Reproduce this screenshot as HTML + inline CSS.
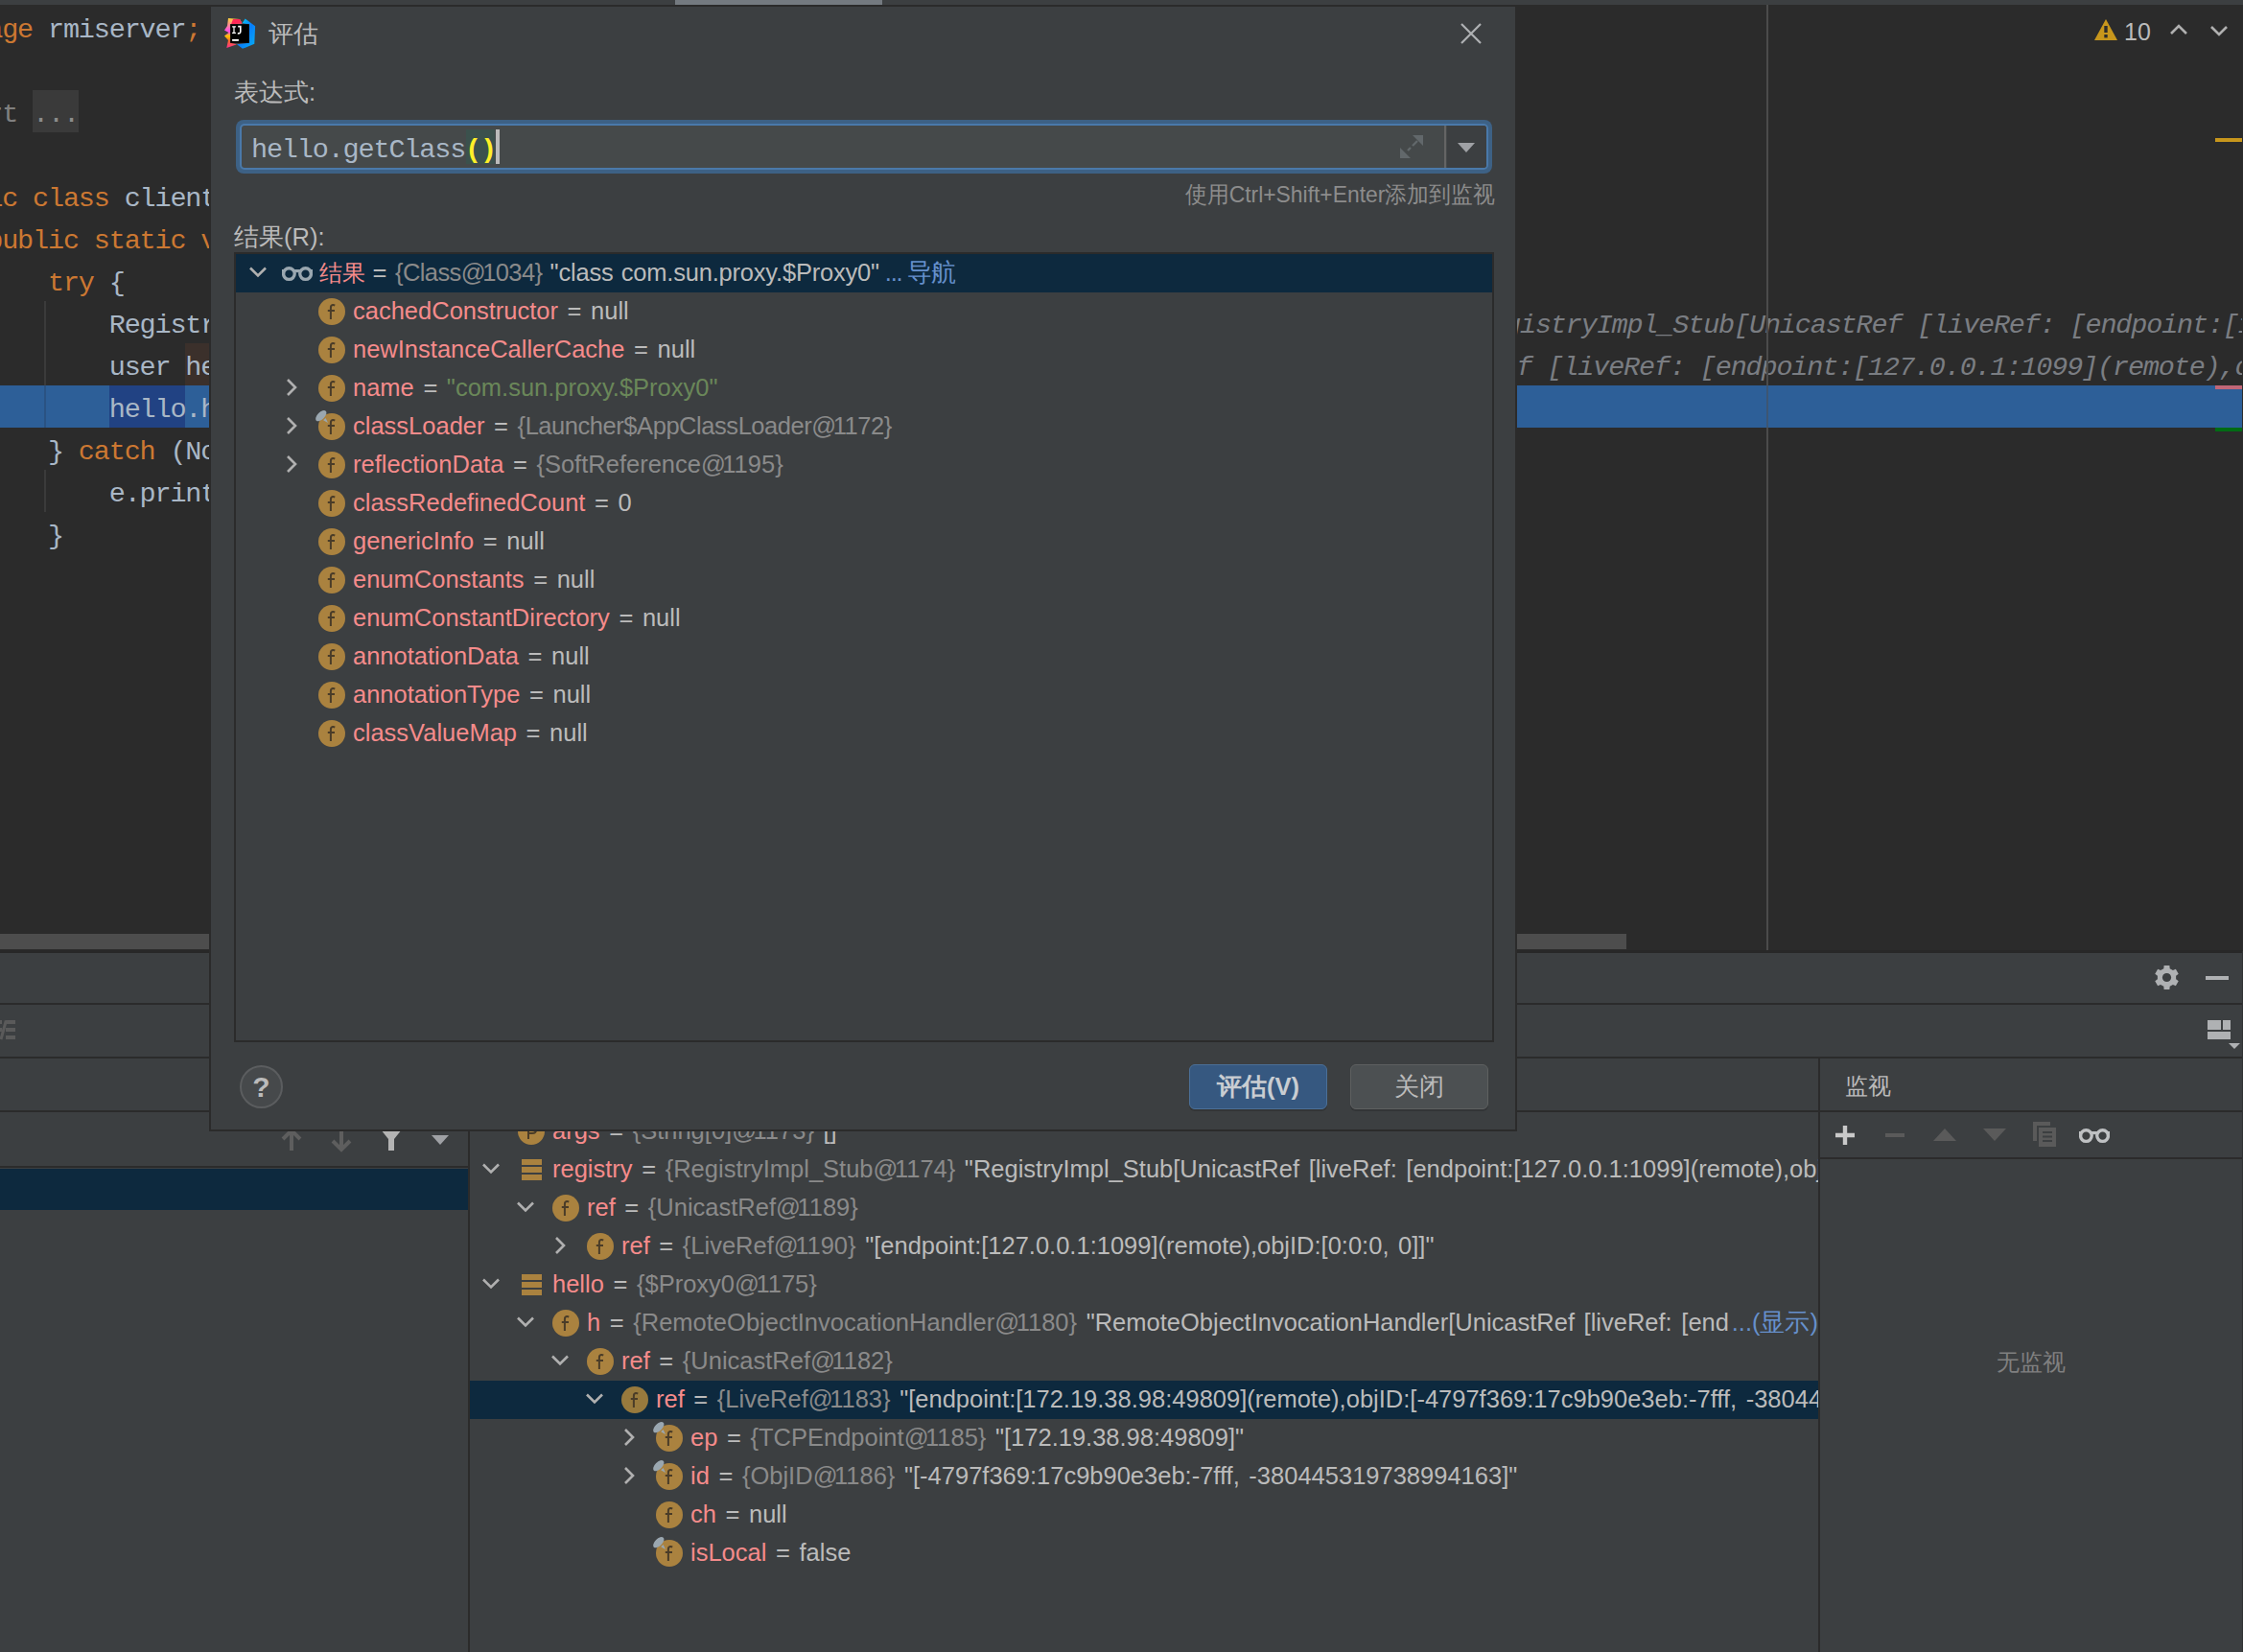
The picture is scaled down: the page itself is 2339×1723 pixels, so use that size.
<!DOCTYPE html>
<html><head><meta charset="utf-8"><style>
html,body{margin:0;padding:0;}
body{width:2339px;height:1723px;overflow:hidden;position:relative;background:#3c3f41;}
body div, body svg{position:absolute;}
body div span{position:static;}
.code{font-family:"Liberation Mono",monospace;font-size:28.5px;letter-spacing:-1.17px;line-height:44px;white-space:pre;}
.hint{font-style:italic;color:#7a7d82;}
.ui{font-family:"Liberation Sans",sans-serif;font-size:25.5px;word-spacing:2.5px;line-height:40px;white-space:pre;}
.row{line-height:44px;}
</style></head><body>
<div style="left:0px;top:0px;width:2339px;height:5px;background:#3c3f41;"></div>
<div style="left:704px;top:0px;width:216px;height:6px;background:#747a80;"></div>
<div style="left:0px;top:5px;width:2339px;height:987px;background:#2b2b2b;"></div>
<div style="left:0px;top:402px;width:2339px;height:44px;background:#2d5f98;"></div>
<div style="left:114px;top:402px;width:79px;height:44px;background:#214283;"></div>
<div style="left:193px;top:358px;width:60px;height:44px;background:#3b302b;"></div>
<div style="left:34px;top:94px;width:48px;height:44px;background:#3a3a3a;"></div>
<div style="left:46px;top:314px;width:2px;height:88px;background:#3b3b3b;"></div>
<div style="left:46px;top:402px;width:2px;height:44px;background:#2a5283;"></div>
<div style="left:46px;top:490px;width:2px;height:44px;background:#3b3b3b;"></div>
<div class="code" style="left:-77.5px;top:10px"><span style="color:#cc7832">package</span><span style="color:#a9b7c6"> rmiserver</span><span style="color:#cc7832">;</span></div>
<div class="code" style="left:-77.5px;top:98px"><span style="color:#808080">import </span><span style="color:#8c8c8c">...</span></div>
<div class="code" style="left:-77.5px;top:186px"><span style="color:#cc7832">public class</span><span style="color:#a9b7c6"> client {</span></div>
<div class="code" style="left:-77.5px;top:230px"><span style="color:#cc7832">    public static void</span><span style="color:#a9b7c6"> main(String[] args) {</span></div>
<div class="code" style="left:-77.5px;top:274px"><span style="color:#cc7832">        try</span><span style="color:#a9b7c6"> {</span></div>
<div class="code" style="left:-77.5px;top:318px"><span style="color:#a9b7c6">            Registry registry = LocateRegistry.getRegistry(</span></div>
<div class="code" style="left:-77.5px;top:362px"><span style="color:#a9b7c6">            user hello = (user) registry.lookup(</span></div>
<div class="code" style="left:-77.5px;top:406px"><span style="color:#a9b7c6">            hello.hello(</span></div>
<div class="code" style="left:-77.5px;top:450px"><span style="color:#a9b7c6">        } </span><span style="color:#cc7832">catch</span><span style="color:#a9b7c6"> (NotBoundException e) {</span></div>
<div class="code" style="left:-77.5px;top:494px"><span style="color:#a9b7c6">            e.printStackTrace();</span></div>
<div class="code" style="left:-77.5px;top:538px"><span style="color:#a9b7c6">        }</span></div>
<div class="code hint" style="left:1537.2px;top:318px">RegistryImpl_Stub[UnicastRef [liveRef: [endpoint:[127.0.0.1:1099](remote),objID:[0:0:0, 0]]]]"</div>
<div class="code hint" style="left:1438.2px;top:362px">UnicastRef [liveRef: [endpoint:[127.0.0.1:1099](remote),objID:[0:0:0, 0]]]]]"</div>
<div style="left:1842px;top:5px;width:2px;height:987px;background:#4b4b4b;"></div>
<div style="left:1842px;top:402px;width:2px;height:44px;background:#3d5673;"></div>
<svg style="left:2183px;top:19px;" width="26" height="24" viewBox="0 0 26 24"><path d="M13 1 L25 23 L1 23 Z" fill="#c7961c"/><rect x="11.3" y="8" width="3.4" height="7" fill="#2b2b2b"/><rect x="11.3" y="17" width="3.4" height="3.4" fill="#2b2b2b"/></svg>
<div class="ui" style="left:2215px;top:13px;font-size:25px;line-height:40px;color:#bbbbbb">10</div>
<svg style="left:2262px;top:24px;" width="20" height="14" viewBox="0 0 20 14"><path d="M2 11 L10 3 L18 11" fill="none" stroke="#b0b0b0" stroke-width="2.6"/></svg>
<svg style="left:2304px;top:25px;" width="20" height="14" viewBox="0 0 20 14"><path d="M2 3 L10 11 L18 3" fill="none" stroke="#b0b0b0" stroke-width="2.6"/></svg>
<div style="left:2338px;top:5px;width:1px;height:987px;background:#2b2b2b;"></div>
<div style="left:2310px;top:144px;width:28px;height:4px;background:#c7961c;"></div>
<div style="left:2310px;top:402px;width:28px;height:4px;background:#c06677;"></div>
<div style="left:2310px;top:446px;width:28px;height:4px;background:#006b14;"></div>
<div style="left:0px;top:974px;width:1696px;height:16px;background:#4d4d4d;"></div>
<div style="left:0px;top:992px;width:2339px;height:731px;background:#3c3f41;"></div>
<div style="left:0px;top:991px;width:2339px;height:3px;background:#282828;"></div>
<div style="left:0px;top:1046px;width:2339px;height:2px;background:#2b2b2b;"></div>
<div style="left:0px;top:1102px;width:2339px;height:2px;background:#2b2b2b;"></div>
<div style="left:0px;top:1158px;width:2339px;height:2px;background:#2b2b2b;"></div>
<div style="left:488px;top:1158px;width:2px;height:565px;background:#2b2b2b;"></div>
<div style="left:1896px;top:1103px;width:2px;height:620px;background:#2b2b2b;"></div>
<div style="left:1898px;top:1207px;width:441px;height:2px;background:#2b2b2b;"></div>
<div style="left:0px;top:1216px;width:488px;height:2px;background:#2b2b2b;"></div>
<div style="left:0px;top:1219px;width:488px;height:43px;background:#0d293e;"></div>
<div style="left:2338px;top:992px;width:1px;height:731px;background:#2f3132;"></div>
<svg style="left:2247px;top:1007px;" width="25" height="25" viewBox="0 0 25 25"><path d="M9.31 3.23 L9.62 0.03 L15.38 0.03 L15.69 3.23 L18.93 5.10 L21.86 3.77 L24.74 8.76 L22.12 10.63 L22.12 14.37 L24.74 16.24 L21.86 21.23 L18.93 19.90 L15.69 21.77 L15.38 24.97 L9.62 24.97 L9.31 21.77 L6.07 19.90 L3.14 21.23 L0.26 16.24 L2.88 14.37 L2.88 10.63 L0.26 8.76 L3.14 3.77 L6.07 5.10 Z" fill="#afb1b3"/><circle cx="12.5" cy="12.5" r="4.6" fill="#3c3f41"/></svg>
<div style="left:2300px;top:1018px;width:24px;height:4px;background:#afb1b3;"></div>
<div style="left:2302px;top:1064px;width:14px;height:10px;background:#afb1b3;"></div>
<div style="left:2318px;top:1064px;width:8px;height:10px;background:#afb1b3;"></div>
<div style="left:2302px;top:1076px;width:24px;height:8px;background:#afb1b3;"></div>
<svg style="left:2324px;top:1088px;" width="12" height="6" viewBox="0 0 12 6"><path d="M0 0 L12 0 L6 6 Z" fill="#afb1b3"/></svg>
<svg style="left:0px;top:1063px;" width="18" height="22" viewBox="0 0 18 22"><g fill="#5a5a5a"><rect x="6" y="1" width="10" height="4"/><rect x="6" y="9" width="10" height="4"/><rect x="6" y="17" width="10" height="4"/><rect x="0" y="1" width="2" height="4"/><rect x="0" y="9" width="2" height="4"/></g><path d="M1 21 L6.3 1.5" stroke="#5a5a5a" stroke-width="3"/></svg>
<svg style="left:293px;top:1176px;" width="22" height="26" viewBox="0 0 22 26"><path d="M2 12 L11 3 L20 12 M11 3 L11 24" fill="none" stroke="#5e5e5e" stroke-width="4"/></svg>
<svg style="left:345px;top:1176px;" width="22" height="26" viewBox="0 0 22 26"><path d="M2 14 L11 23 L20 14 M11 23 L11 2" fill="none" stroke="#5e5e5e" stroke-width="4"/></svg>
<svg style="left:397px;top:1178px;" width="22" height="23" viewBox="0 0 22 23"><path d="M0 0 L22 0 L14 10 L14 22 L8 22 L8 10 Z" fill="#b4b4b4"/></svg>
<svg style="left:450px;top:1184px;" width="18" height="10" viewBox="0 0 18 10"><path d="M0 0 L18 0 L9 10 Z" fill="#9fa1a5"/></svg>
<div class="ui" style="left:1924px;top:1113px;color:#bbbbbb;font-size:24px">监视</div>
<svg style="left:1913px;top:1173px;" width="22" height="22" viewBox="0 0 22 22"><path d="M11 1 V21 M1 11 H21" stroke="#c9c9c9" stroke-width="4.4"/></svg>
<div style="left:1966px;top:1182px;width:20px;height:4px;background:#5a5a5a;"></div>
<svg style="left:2016px;top:1177px;" width="24" height="13" viewBox="0 0 24 13"><path d="M12 0 L24 13 L0 13 Z" fill="#5a5a5a"/></svg>
<svg style="left:2068px;top:1177px;" width="24" height="13" viewBox="0 0 24 13"><path d="M0 0 L24 0 L12 13 Z" fill="#5a5a5a"/></svg>
<svg style="left:2120px;top:1170px;" width="25" height="27" viewBox="0 0 25 27"><path d="M0 0 H18 V4 H4 V20 H0 Z" fill="#5a5a5a"/><rect x="6" y="6" width="18" height="20" fill="#5a5a5a"/><rect x="10" y="10" width="10" height="2" fill="#3c3f41"/><rect x="10" y="14.5" width="10" height="2" fill="#3c3f41"/><rect x="10" y="19" width="10" height="2" fill="#3c3f41"/></svg>
<svg style="left:2168px;top:1177px;" width="32" height="16" viewBox="0 0 32 16"><g fill="none" stroke="#bfc1c3" stroke-width="3.3"><circle cx="7.4" cy="7.6" r="5.85"/><circle cx="24.6" cy="7.6" r="5.85"/></g><g fill="#bfc1c3"><rect x="0" y="3" width="3.2" height="5"/><rect x="28.8" y="3" width="3.2" height="5"/><rect x="12.5" y="3" width="7" height="3.2"/></g></svg>
<div class="ui" style="left:2082px;top:1401px;color:#808080;font-size:24px">无监视</div>
<div style="left:490px;top:1160px;width:1406px;height:563px;overflow:hidden">
<svg style="left:50.00px;top:5.50px;" width="28" height="28" viewBox="0 0 28 28"><circle cx="14" cy="14" r="14" fill="#aa823f"/><path d="M11 22 V8.5 H15 C17.8 8.5 19.2 10 19.2 12.3 C19.2 14.6 17.8 16 15 16 H11" fill="none" stroke="#4a3c28" stroke-width="2"/></svg>
<div class="ui row" style="left:86.00px;top:-3.50px;"><span style="color:#f58b8b;">args</span><span style="color:#bbbbbb;"> = </span><span style="color:#8a8a8a;">{String[0]<span style="letter-spacing:-3.5px">@</span>1173}</span><span style="color:#bbbbbb;"> []</span></div>
<svg style="left:12.00px;top:51.50px;" width="20" height="14" viewBox="0 0 20 14"><path d="M2 2.5 L10 10.5 L18 2.5" fill="none" stroke="#b0b0b0" stroke-width="2.6"/></svg>
<svg style="left:53.50px;top:48.50px;" width="21" height="22" viewBox="0 0 21 22"><rect x="0" y="0" width="21" height="6" fill="#aa823f"/><rect x="0" y="8" width="21" height="6" fill="#aa823f"/><rect x="0" y="16" width="21" height="6" fill="#aa823f"/></svg>
<div class="ui row" style="left:86.00px;top:36.50px;"><span style="color:#f58b8b;">registry</span><span style="color:#bbbbbb;"> = </span><span style="color:#8a8a8a;">{RegistryImpl_Stub<span style="letter-spacing:-3.5px">@</span>1174}</span><span style="color:#bbbbbb;"> "RegistryImpl_Stub[UnicastRef [liveRef: [endpoint:[127.0.0.1:1099](remote),objID:[0:0:0, 0]]]]"</span></div>
<svg style="left:48.00px;top:91.50px;" width="20" height="14" viewBox="0 0 20 14"><path d="M2 2.5 L10 10.5 L18 2.5" fill="none" stroke="#b0b0b0" stroke-width="2.6"/></svg>
<svg style="left:86.00px;top:85.50px;" width="28" height="28" viewBox="0 0 28 28"><circle cx="14" cy="14" r="14" fill="#aa823f"/><path d="M17.2 7.6 C16.4 7.1 15.6 7 14.9 7.1 C13.5 7.3 12.9 8.3 12.9 10 V22 M9.8 12.9 H17" fill="none" stroke="#4a3c28" stroke-width="2"/></svg>
<div class="ui row" style="left:122.00px;top:76.50px;"><span style="color:#f58b8b;">ref</span><span style="color:#bbbbbb;"> = </span><span style="color:#8a8a8a;">{UnicastRef<span style="letter-spacing:-3.5px">@</span>1189}</span></div>
<svg style="left:87.00px;top:128.50px;" width="14" height="20" viewBox="0 0 14 20"><path d="M3 2 L11 10 L3 18" fill="none" stroke="#b0b0b0" stroke-width="2.6"/></svg>
<svg style="left:122.00px;top:125.50px;" width="28" height="28" viewBox="0 0 28 28"><circle cx="14" cy="14" r="14" fill="#aa823f"/><path d="M17.2 7.6 C16.4 7.1 15.6 7 14.9 7.1 C13.5 7.3 12.9 8.3 12.9 10 V22 M9.8 12.9 H17" fill="none" stroke="#4a3c28" stroke-width="2"/></svg>
<div class="ui row" style="left:158.00px;top:116.50px;"><span style="color:#f58b8b;">ref</span><span style="color:#bbbbbb;"> = </span><span style="color:#8a8a8a;">{LiveRef<span style="letter-spacing:-3.5px">@</span>1190}</span><span style="color:#bbbbbb;"> "[endpoint:[127.0.0.1:1099](remote),objID:[0:0:0, 0]]"</span></div>
<svg style="left:12.00px;top:171.50px;" width="20" height="14" viewBox="0 0 20 14"><path d="M2 2.5 L10 10.5 L18 2.5" fill="none" stroke="#b0b0b0" stroke-width="2.6"/></svg>
<svg style="left:53.50px;top:168.50px;" width="21" height="22" viewBox="0 0 21 22"><rect x="0" y="0" width="21" height="6" fill="#aa823f"/><rect x="0" y="8" width="21" height="6" fill="#aa823f"/><rect x="0" y="16" width="21" height="6" fill="#aa823f"/></svg>
<div class="ui row" style="left:86.00px;top:156.50px;"><span style="color:#f58b8b;">hello</span><span style="color:#bbbbbb;"> = </span><span style="color:#8a8a8a;">{$Proxy0<span style="letter-spacing:-3.5px">@</span>1175}</span></div>
<svg style="left:48.00px;top:211.50px;" width="20" height="14" viewBox="0 0 20 14"><path d="M2 2.5 L10 10.5 L18 2.5" fill="none" stroke="#b0b0b0" stroke-width="2.6"/></svg>
<svg style="left:86.00px;top:205.50px;" width="28" height="28" viewBox="0 0 28 28"><circle cx="14" cy="14" r="14" fill="#aa823f"/><path d="M17.2 7.6 C16.4 7.1 15.6 7 14.9 7.1 C13.5 7.3 12.9 8.3 12.9 10 V22 M9.8 12.9 H17" fill="none" stroke="#4a3c28" stroke-width="2"/></svg>
<div class="ui row" style="left:122.00px;top:196.50px;"><span style="color:#f58b8b;">h</span><span style="color:#bbbbbb;"> = </span><span style="color:#8a8a8a;">{RemoteObjectInvocationHandler<span style="letter-spacing:-3.5px">@</span>1180}</span><span style="color:#bbbbbb;"> "RemoteObjectInvocationHandler[UnicastRef [liveRef: [end</span></div>
<div class="ui row" style="top:196.50px;right:0px;color:#6690cc">...(显示)</div>
<svg style="left:84.00px;top:251.50px;" width="20" height="14" viewBox="0 0 20 14"><path d="M2 2.5 L10 10.5 L18 2.5" fill="none" stroke="#b0b0b0" stroke-width="2.6"/></svg>
<svg style="left:122.00px;top:245.50px;" width="28" height="28" viewBox="0 0 28 28"><circle cx="14" cy="14" r="14" fill="#aa823f"/><path d="M17.2 7.6 C16.4 7.1 15.6 7 14.9 7.1 C13.5 7.3 12.9 8.3 12.9 10 V22 M9.8 12.9 H17" fill="none" stroke="#4a3c28" stroke-width="2"/></svg>
<div class="ui row" style="left:158.00px;top:236.50px;"><span style="color:#f58b8b;">ref</span><span style="color:#bbbbbb;"> = </span><span style="color:#8a8a8a;">{UnicastRef<span style="letter-spacing:-3.5px">@</span>1182}</span></div>
<div style="left:-490.00px;top:280.00px;width:1896px;height:40px;background:#0d293e;"></div>
<svg style="left:120.00px;top:291.50px;" width="20" height="14" viewBox="0 0 20 14"><path d="M2 2.5 L10 10.5 L18 2.5" fill="none" stroke="#b0b0b0" stroke-width="2.6"/></svg>
<svg style="left:158.00px;top:285.50px;" width="28" height="28" viewBox="0 0 28 28"><circle cx="14" cy="14" r="14" fill="#987a3d"/><path d="M17.2 7.6 C16.4 7.1 15.6 7 14.9 7.1 C13.5 7.3 12.9 8.3 12.9 10 V22 M9.8 12.9 H17" fill="none" stroke="#4a3c28" stroke-width="2"/></svg>
<div class="ui row" style="left:194.00px;top:276.50px;"><span style="color:#f58b8b;">ref</span><span style="color:#bbbbbb;"> = </span><span style="color:#8a8a8a;">{LiveRef<span style="letter-spacing:-3.5px">@</span>1183}</span><span style="color:#bbbbbb;"> "[endpoint:[172.19.38.98:49809](remote),objID:[-4797f369:17c9b90e3eb:-7fff, -380445319738994163]]"</span></div>
<svg style="left:159.00px;top:328.50px;" width="14" height="20" viewBox="0 0 14 20"><path d="M3 2 L11 10 L3 18" fill="none" stroke="#b0b0b0" stroke-width="2.6"/></svg>
<svg style="left:194.00px;top:325.50px;" width="28" height="28" viewBox="0 0 28 28"><circle cx="14" cy="14" r="14" fill="#aa823f"/><path d="M17.2 7.6 C16.4 7.1 15.6 7 14.9 7.1 C13.5 7.3 12.9 8.3 12.9 10 V22 M9.8 12.9 H17" fill="none" stroke="#4a3c28" stroke-width="2"/></svg>
<svg style="left:190.00px;top:321.50px;" width="16" height="16" viewBox="0 0 16 16"><ellipse cx="6.8" cy="6.7" rx="7" ry="3.7" transform="rotate(-45 6.8 6.7)" fill="#9aa7b0"/><path d="M9.1 11.3 L11.6 9 L14 14 Z" fill="#9aa7b0"/></svg>
<div class="ui row" style="left:230.00px;top:316.50px;"><span style="color:#f58b8b;">ep</span><span style="color:#bbbbbb;"> = </span><span style="color:#8a8a8a;">{TCPEndpoint<span style="letter-spacing:-3.5px">@</span>1185}</span><span style="color:#bbbbbb;"> "[172.19.38.98:49809]"</span></div>
<svg style="left:159.00px;top:368.50px;" width="14" height="20" viewBox="0 0 14 20"><path d="M3 2 L11 10 L3 18" fill="none" stroke="#b0b0b0" stroke-width="2.6"/></svg>
<svg style="left:194.00px;top:365.50px;" width="28" height="28" viewBox="0 0 28 28"><circle cx="14" cy="14" r="14" fill="#aa823f"/><path d="M17.2 7.6 C16.4 7.1 15.6 7 14.9 7.1 C13.5 7.3 12.9 8.3 12.9 10 V22 M9.8 12.9 H17" fill="none" stroke="#4a3c28" stroke-width="2"/></svg>
<svg style="left:190.00px;top:361.50px;" width="16" height="16" viewBox="0 0 16 16"><ellipse cx="6.8" cy="6.7" rx="7" ry="3.7" transform="rotate(-45 6.8 6.7)" fill="#9aa7b0"/><path d="M9.1 11.3 L11.6 9 L14 14 Z" fill="#9aa7b0"/></svg>
<div class="ui row" style="left:230.00px;top:356.50px;"><span style="color:#f58b8b;">id</span><span style="color:#bbbbbb;"> = </span><span style="color:#8a8a8a;">{ObjID<span style="letter-spacing:-3.5px">@</span>1186}</span><span style="color:#bbbbbb;"> "[-4797f369:17c9b90e3eb:-7fff, -380445319738994163]"</span></div>
<svg style="left:194.00px;top:405.50px;" width="28" height="28" viewBox="0 0 28 28"><circle cx="14" cy="14" r="14" fill="#aa823f"/><path d="M17.2 7.6 C16.4 7.1 15.6 7 14.9 7.1 C13.5 7.3 12.9 8.3 12.9 10 V22 M9.8 12.9 H17" fill="none" stroke="#4a3c28" stroke-width="2"/></svg>
<div class="ui row" style="left:230.00px;top:396.50px;"><span style="color:#f58b8b;">ch</span><span style="color:#bbbbbb;"> = </span><span style="color:#bbbbbb;">null</span></div>
<svg style="left:194.00px;top:445.50px;" width="28" height="28" viewBox="0 0 28 28"><circle cx="14" cy="14" r="14" fill="#aa823f"/><path d="M17.2 7.6 C16.4 7.1 15.6 7 14.9 7.1 C13.5 7.3 12.9 8.3 12.9 10 V22 M9.8 12.9 H17" fill="none" stroke="#4a3c28" stroke-width="2"/></svg>
<svg style="left:190.00px;top:441.50px;" width="16" height="16" viewBox="0 0 16 16"><ellipse cx="6.8" cy="6.7" rx="7" ry="3.7" transform="rotate(-45 6.8 6.7)" fill="#9aa7b0"/><path d="M9.1 11.3 L11.6 9 L14 14 Z" fill="#9aa7b0"/></svg>
<div class="ui row" style="left:230.00px;top:436.50px;"><span style="color:#f58b8b;">isLocal</span><span style="color:#bbbbbb;"> = </span><span style="color:#bbbbbb;">false</span></div>
</div>
<div style="left:218px;top:5px;width:1364px;height:1175px;background:#2b2b2b"></div>
<div style="left:220px;top:7px;width:1360px;height:1171px;background:#3c3f41;"></div>
<svg style="left:230px;top:15px;" width="40" height="40" viewBox="0 0 40 40">
<defs>
<linearGradient id="gL" x1="0" y1="0" x2="0" y2="1"><stop offset="0" stop-color="#fcd33a"/><stop offset="0.45" stop-color="#ff45ed"/><stop offset="0.6" stop-color="#ffc400"/><stop offset="0.75" stop-color="#ff6a2a"/><stop offset="1" stop-color="#ff318c"/></linearGradient>
<linearGradient id="gB" x1="0" y1="0" x2="1" y2="1"><stop offset="0" stop-color="#07e3f2"/><stop offset="0.5" stop-color="#087cfa"/><stop offset="1" stop-color="#07b3f2"/></linearGradient>
</defs>
<path d="M8 4 L20 5 L22.5 9.5 L10.2 10.2 L10.2 29.7 L17 31.3 L6.3 35 L8 27 L4 22.5 L8.5 19 L4 16.5 L7 12 Z" fill="url(#gL)"/>
<path d="M13 5 L20 5 L22.5 9.5 L11 10.2 Z" fill="#fe2857"/>
<path d="M22.5 9.2 L25.7 4.6 L36.1 12.3 L35.3 30.8 L23 35.8 L17 31.2 L29.8 29.7 L29.8 10.2 Z" fill="url(#gB)"/>
<rect x="10.2" y="10.2" width="19.6" height="19.6" fill="#000"/>
<path d="M12.1 12.3 H15.9 V13.6 H14.6 V18.8 H15.9 V20.1 H12.1 V18.8 H13.4 V13.6 H12.1 Z" fill="#fff"/>
<path d="M18.2 12.6 H20.8 V17.8 C20.8 19.5 19.6 20.2 17.8 19.8" fill="none" stroke="#fff" stroke-width="1.6"/>
<rect x="12.1" y="25.9" width="6.8" height="1.9" fill="#fff"/>
</svg>
<div class="ui" style="left:280px;top:15px;color:#bbbbbb">评估</div>
<svg style="left:1523px;top:24px;" width="22" height="22" viewBox="0 0 22 22"><path d="M1 1 L21 21 M21 1 L1 21" stroke="#afb1b3" stroke-width="2.2"/></svg>
<div class="ui" style="left:244px;top:76px;color:#bbbbbb">表达式:</div>
<div style="left:246px;top:125px;width:1310px;height:56px;background:#3d6185;border-radius:8px"></div>
<div style="left:250px;top:129px;width:1302px;height:48px;background:#4a79aa;border-radius:5px"></div>
<div style="left:252px;top:131px;width:1298px;height:44px;background:#45494a;border-radius:3px"></div>
<div style="left:1509px;top:131px;width:41px;height:44px;background:#3c3f41;border-radius:0 3px 3px 0"></div>
<div style="left:1506px;top:131px;width:2px;height:44px;background:#646464;"></div>
<svg style="left:1459px;top:140px;" width="26" height="26" viewBox="0 0 26 26"><path d="M14 1 H25 V12 Z M1 14 V25 H12 Z" fill="#62686b"/><path d="M9 17 L12 14 M14 12 L19 7" stroke="#62686b" stroke-width="2.4"/></svg>
<svg style="left:1520px;top:149px;" width="18" height="10" viewBox="0 0 18 10"><path d="M0 0 L18 0 L9 10 Z" fill="#9fa1a5"/></svg>
<div style="left:486px;top:135px;width:30px;height:36px;background:#3b514d;"></div>
<div class="code" style="left:262px;top:134.5px;color:#a9b7c6">hello.getClass<span style="color:#ffef28;font-weight:bold">()</span></div>
<div style="left:517px;top:135px;width:4px;height:36px;background:#bbbbbb;"></div>
<div class="ui" style="right:780px;top:183px;color:#8c8c8c;font-size:24px;word-spacing:0;transform:scaleX(0.953);transform-origin:100% 50%">使用Ctrl+Shift+Enter添加到监视</div>
<div class="ui" style="left:244px;top:227px;color:#bbbbbb">结果(R):</div>
<div style="left:244px;top:263px;width:1310px;height:820px;border:2px solid #2b2b2b"></div>
<div style="left:246px;top:265px;width:1310px;height:40px;background:#0d293e;"></div>
<svg style="left:259px;top:277px;" width="20" height="14" viewBox="0 0 20 14"><path d="M2 2.5 L10 10.5 L18 2.5" fill="none" stroke="#b0b0b0" stroke-width="2.6"/></svg>
<svg style="left:294px;top:278px;" width="32" height="16" viewBox="0 0 32 16"><g fill="none" stroke="#9aa7b0" stroke-width="3.3"><circle cx="7.4" cy="7.6" r="5.85"/><circle cx="24.6" cy="7.6" r="5.85"/></g><g fill="#9aa7b0"><rect x="0" y="3" width="3.2" height="5"/><rect x="28.8" y="3" width="3.2" height="5"/><rect x="12.5" y="3" width="7" height="3.2"/></g></svg>
<div class="ui row" style="left:333px;top:262px;"><span style="color:#f58b8b;font-size:24px;letter-spacing:-0.5px">结果</span><span style="color:#bbbbbb;word-spacing:1.5px"> = </span><span style="color:#8a8a8a;letter-spacing:-0.6px">{Class<span style="letter-spacing:-3.5px">@</span>1034}</span><span style="color:#bbbbbb;letter-spacing:-0.2px;word-spacing:1.3px"> "class com.sun.proxy.$Proxy0"</span><span style="color:#6690cc;letter-spacing:-1.2px;word-spacing:0"> ... 导航</span></div>
<svg style="left:332px;top:311px;" width="28" height="28" viewBox="0 0 28 28"><circle cx="14" cy="14" r="14" fill="#aa823f"/><path d="M17.2 7.6 C16.4 7.1 15.6 7 14.9 7.1 C13.5 7.3 12.9 8.3 12.9 10 V22 M9.8 12.9 H17" fill="none" stroke="#4a3c28" stroke-width="2"/></svg>
<div class="ui row" style="left:368px;top:302px;"><span style="color:#f58b8b;">cachedConstructor</span><span style="color:#bbbbbb;"> = </span><span style="color:#bbbbbb;">null</span></div>
<svg style="left:332px;top:351px;" width="28" height="28" viewBox="0 0 28 28"><circle cx="14" cy="14" r="14" fill="#aa823f"/><path d="M17.2 7.6 C16.4 7.1 15.6 7 14.9 7.1 C13.5 7.3 12.9 8.3 12.9 10 V22 M9.8 12.9 H17" fill="none" stroke="#4a3c28" stroke-width="2"/></svg>
<div class="ui row" style="left:368px;top:342px;"><span style="color:#f58b8b;">newInstanceCallerCache</span><span style="color:#bbbbbb;"> = </span><span style="color:#bbbbbb;">null</span></div>
<svg style="left:297px;top:394px;" width="14" height="20" viewBox="0 0 14 20"><path d="M3 2 L11 10 L3 18" fill="none" stroke="#b0b0b0" stroke-width="2.6"/></svg>
<svg style="left:332px;top:391px;" width="28" height="28" viewBox="0 0 28 28"><circle cx="14" cy="14" r="14" fill="#aa823f"/><path d="M17.2 7.6 C16.4 7.1 15.6 7 14.9 7.1 C13.5 7.3 12.9 8.3 12.9 10 V22 M9.8 12.9 H17" fill="none" stroke="#4a3c28" stroke-width="2"/></svg>
<div class="ui row" style="left:368px;top:382px;"><span style="color:#f58b8b;">name</span><span style="color:#bbbbbb;"> = </span><span style="color:#6a8759;">"com.sun.proxy.$Proxy0"</span></div>
<svg style="left:297px;top:434px;" width="14" height="20" viewBox="0 0 14 20"><path d="M3 2 L11 10 L3 18" fill="none" stroke="#b0b0b0" stroke-width="2.6"/></svg>
<svg style="left:332px;top:431px;" width="28" height="28" viewBox="0 0 28 28"><circle cx="14" cy="14" r="14" fill="#aa823f"/><path d="M17.2 7.6 C16.4 7.1 15.6 7 14.9 7.1 C13.5 7.3 12.9 8.3 12.9 10 V22 M9.8 12.9 H17" fill="none" stroke="#4a3c28" stroke-width="2"/></svg>
<svg style="left:328px;top:427px;" width="16" height="16" viewBox="0 0 16 16"><ellipse cx="6.8" cy="6.7" rx="7" ry="3.7" transform="rotate(-45 6.8 6.7)" fill="#9aa7b0"/><path d="M9.1 11.3 L11.6 9 L14 14 Z" fill="#9aa7b0"/></svg>
<div class="ui row" style="left:368px;top:422px;"><span style="color:#f58b8b;">classLoader</span><span style="color:#bbbbbb;"> = </span><span style="color:#8a8a8a;letter-spacing:-0.45px">{Launcher$AppClassLoader<span style="letter-spacing:-3.5px">@</span>1172}</span></div>
<svg style="left:297px;top:474px;" width="14" height="20" viewBox="0 0 14 20"><path d="M3 2 L11 10 L3 18" fill="none" stroke="#b0b0b0" stroke-width="2.6"/></svg>
<svg style="left:332px;top:471px;" width="28" height="28" viewBox="0 0 28 28"><circle cx="14" cy="14" r="14" fill="#aa823f"/><path d="M17.2 7.6 C16.4 7.1 15.6 7 14.9 7.1 C13.5 7.3 12.9 8.3 12.9 10 V22 M9.8 12.9 H17" fill="none" stroke="#4a3c28" stroke-width="2"/></svg>
<div class="ui row" style="left:368px;top:462px;"><span style="color:#f58b8b;">reflectionData</span><span style="color:#bbbbbb;"> = </span><span style="color:#8a8a8a;">{SoftReference<span style="letter-spacing:-3.5px">@</span>1195}</span></div>
<svg style="left:332px;top:511px;" width="28" height="28" viewBox="0 0 28 28"><circle cx="14" cy="14" r="14" fill="#aa823f"/><path d="M17.2 7.6 C16.4 7.1 15.6 7 14.9 7.1 C13.5 7.3 12.9 8.3 12.9 10 V22 M9.8 12.9 H17" fill="none" stroke="#4a3c28" stroke-width="2"/></svg>
<div class="ui row" style="left:368px;top:502px;"><span style="color:#f58b8b;">classRedefinedCount</span><span style="color:#bbbbbb;"> = </span><span style="color:#bbbbbb;">0</span></div>
<svg style="left:332px;top:551px;" width="28" height="28" viewBox="0 0 28 28"><circle cx="14" cy="14" r="14" fill="#aa823f"/><path d="M17.2 7.6 C16.4 7.1 15.6 7 14.9 7.1 C13.5 7.3 12.9 8.3 12.9 10 V22 M9.8 12.9 H17" fill="none" stroke="#4a3c28" stroke-width="2"/></svg>
<div class="ui row" style="left:368px;top:542px;"><span style="color:#f58b8b;">genericInfo</span><span style="color:#bbbbbb;"> = </span><span style="color:#bbbbbb;">null</span></div>
<svg style="left:332px;top:591px;" width="28" height="28" viewBox="0 0 28 28"><circle cx="14" cy="14" r="14" fill="#aa823f"/><path d="M17.2 7.6 C16.4 7.1 15.6 7 14.9 7.1 C13.5 7.3 12.9 8.3 12.9 10 V22 M9.8 12.9 H17" fill="none" stroke="#4a3c28" stroke-width="2"/></svg>
<div class="ui row" style="left:368px;top:582px;"><span style="color:#f58b8b;">enumConstants</span><span style="color:#bbbbbb;"> = </span><span style="color:#bbbbbb;">null</span></div>
<svg style="left:332px;top:631px;" width="28" height="28" viewBox="0 0 28 28"><circle cx="14" cy="14" r="14" fill="#aa823f"/><path d="M17.2 7.6 C16.4 7.1 15.6 7 14.9 7.1 C13.5 7.3 12.9 8.3 12.9 10 V22 M9.8 12.9 H17" fill="none" stroke="#4a3c28" stroke-width="2"/></svg>
<div class="ui row" style="left:368px;top:622px;"><span style="color:#f58b8b;">enumConstantDirectory</span><span style="color:#bbbbbb;"> = </span><span style="color:#bbbbbb;">null</span></div>
<svg style="left:332px;top:671px;" width="28" height="28" viewBox="0 0 28 28"><circle cx="14" cy="14" r="14" fill="#aa823f"/><path d="M17.2 7.6 C16.4 7.1 15.6 7 14.9 7.1 C13.5 7.3 12.9 8.3 12.9 10 V22 M9.8 12.9 H17" fill="none" stroke="#4a3c28" stroke-width="2"/></svg>
<div class="ui row" style="left:368px;top:662px;"><span style="color:#f58b8b;">annotationData</span><span style="color:#bbbbbb;"> = </span><span style="color:#bbbbbb;">null</span></div>
<svg style="left:332px;top:711px;" width="28" height="28" viewBox="0 0 28 28"><circle cx="14" cy="14" r="14" fill="#aa823f"/><path d="M17.2 7.6 C16.4 7.1 15.6 7 14.9 7.1 C13.5 7.3 12.9 8.3 12.9 10 V22 M9.8 12.9 H17" fill="none" stroke="#4a3c28" stroke-width="2"/></svg>
<div class="ui row" style="left:368px;top:702px;"><span style="color:#f58b8b;">annotationType</span><span style="color:#bbbbbb;"> = </span><span style="color:#bbbbbb;">null</span></div>
<svg style="left:332px;top:751px;" width="28" height="28" viewBox="0 0 28 28"><circle cx="14" cy="14" r="14" fill="#aa823f"/><path d="M17.2 7.6 C16.4 7.1 15.6 7 14.9 7.1 C13.5 7.3 12.9 8.3 12.9 10 V22 M9.8 12.9 H17" fill="none" stroke="#4a3c28" stroke-width="2"/></svg>
<div class="ui row" style="left:368px;top:742px;"><span style="color:#f58b8b;">classValueMap</span><span style="color:#bbbbbb;"> = </span><span style="color:#bbbbbb;">null</span></div>
<div style="left:250px;top:1111px;width:41px;height:41px;border-radius:50%;background:#46494b;border:2px solid #5b5d5f"></div>
<div class="ui" style="left:250px;top:1111px;width:45px;line-height:45px;text-align:center;font-weight:bold;font-size:30px;color:#bbbbbb">?</div>
<div style="left:1240px;top:1110px;width:142px;height:45px;background:#365880;border:1px solid #4b6f97;border-radius:6px;box-shadow:0 2px 0 #333537"></div>
<div class="ui" style="left:1240px;top:1110px;width:144px;line-height:47px;text-align:center;font-weight:bold;color:#c9cdd2">评估(V)</div>
<div style="left:1408px;top:1110px;width:142px;height:45px;background:#4c5052;border:1px solid #5e6060;border-radius:6px;box-shadow:0 2px 0 #333537"></div>
<div class="ui" style="left:1408px;top:1110px;width:144px;line-height:47px;text-align:center;color:#bbbbbb">关闭</div>
</body></html>
